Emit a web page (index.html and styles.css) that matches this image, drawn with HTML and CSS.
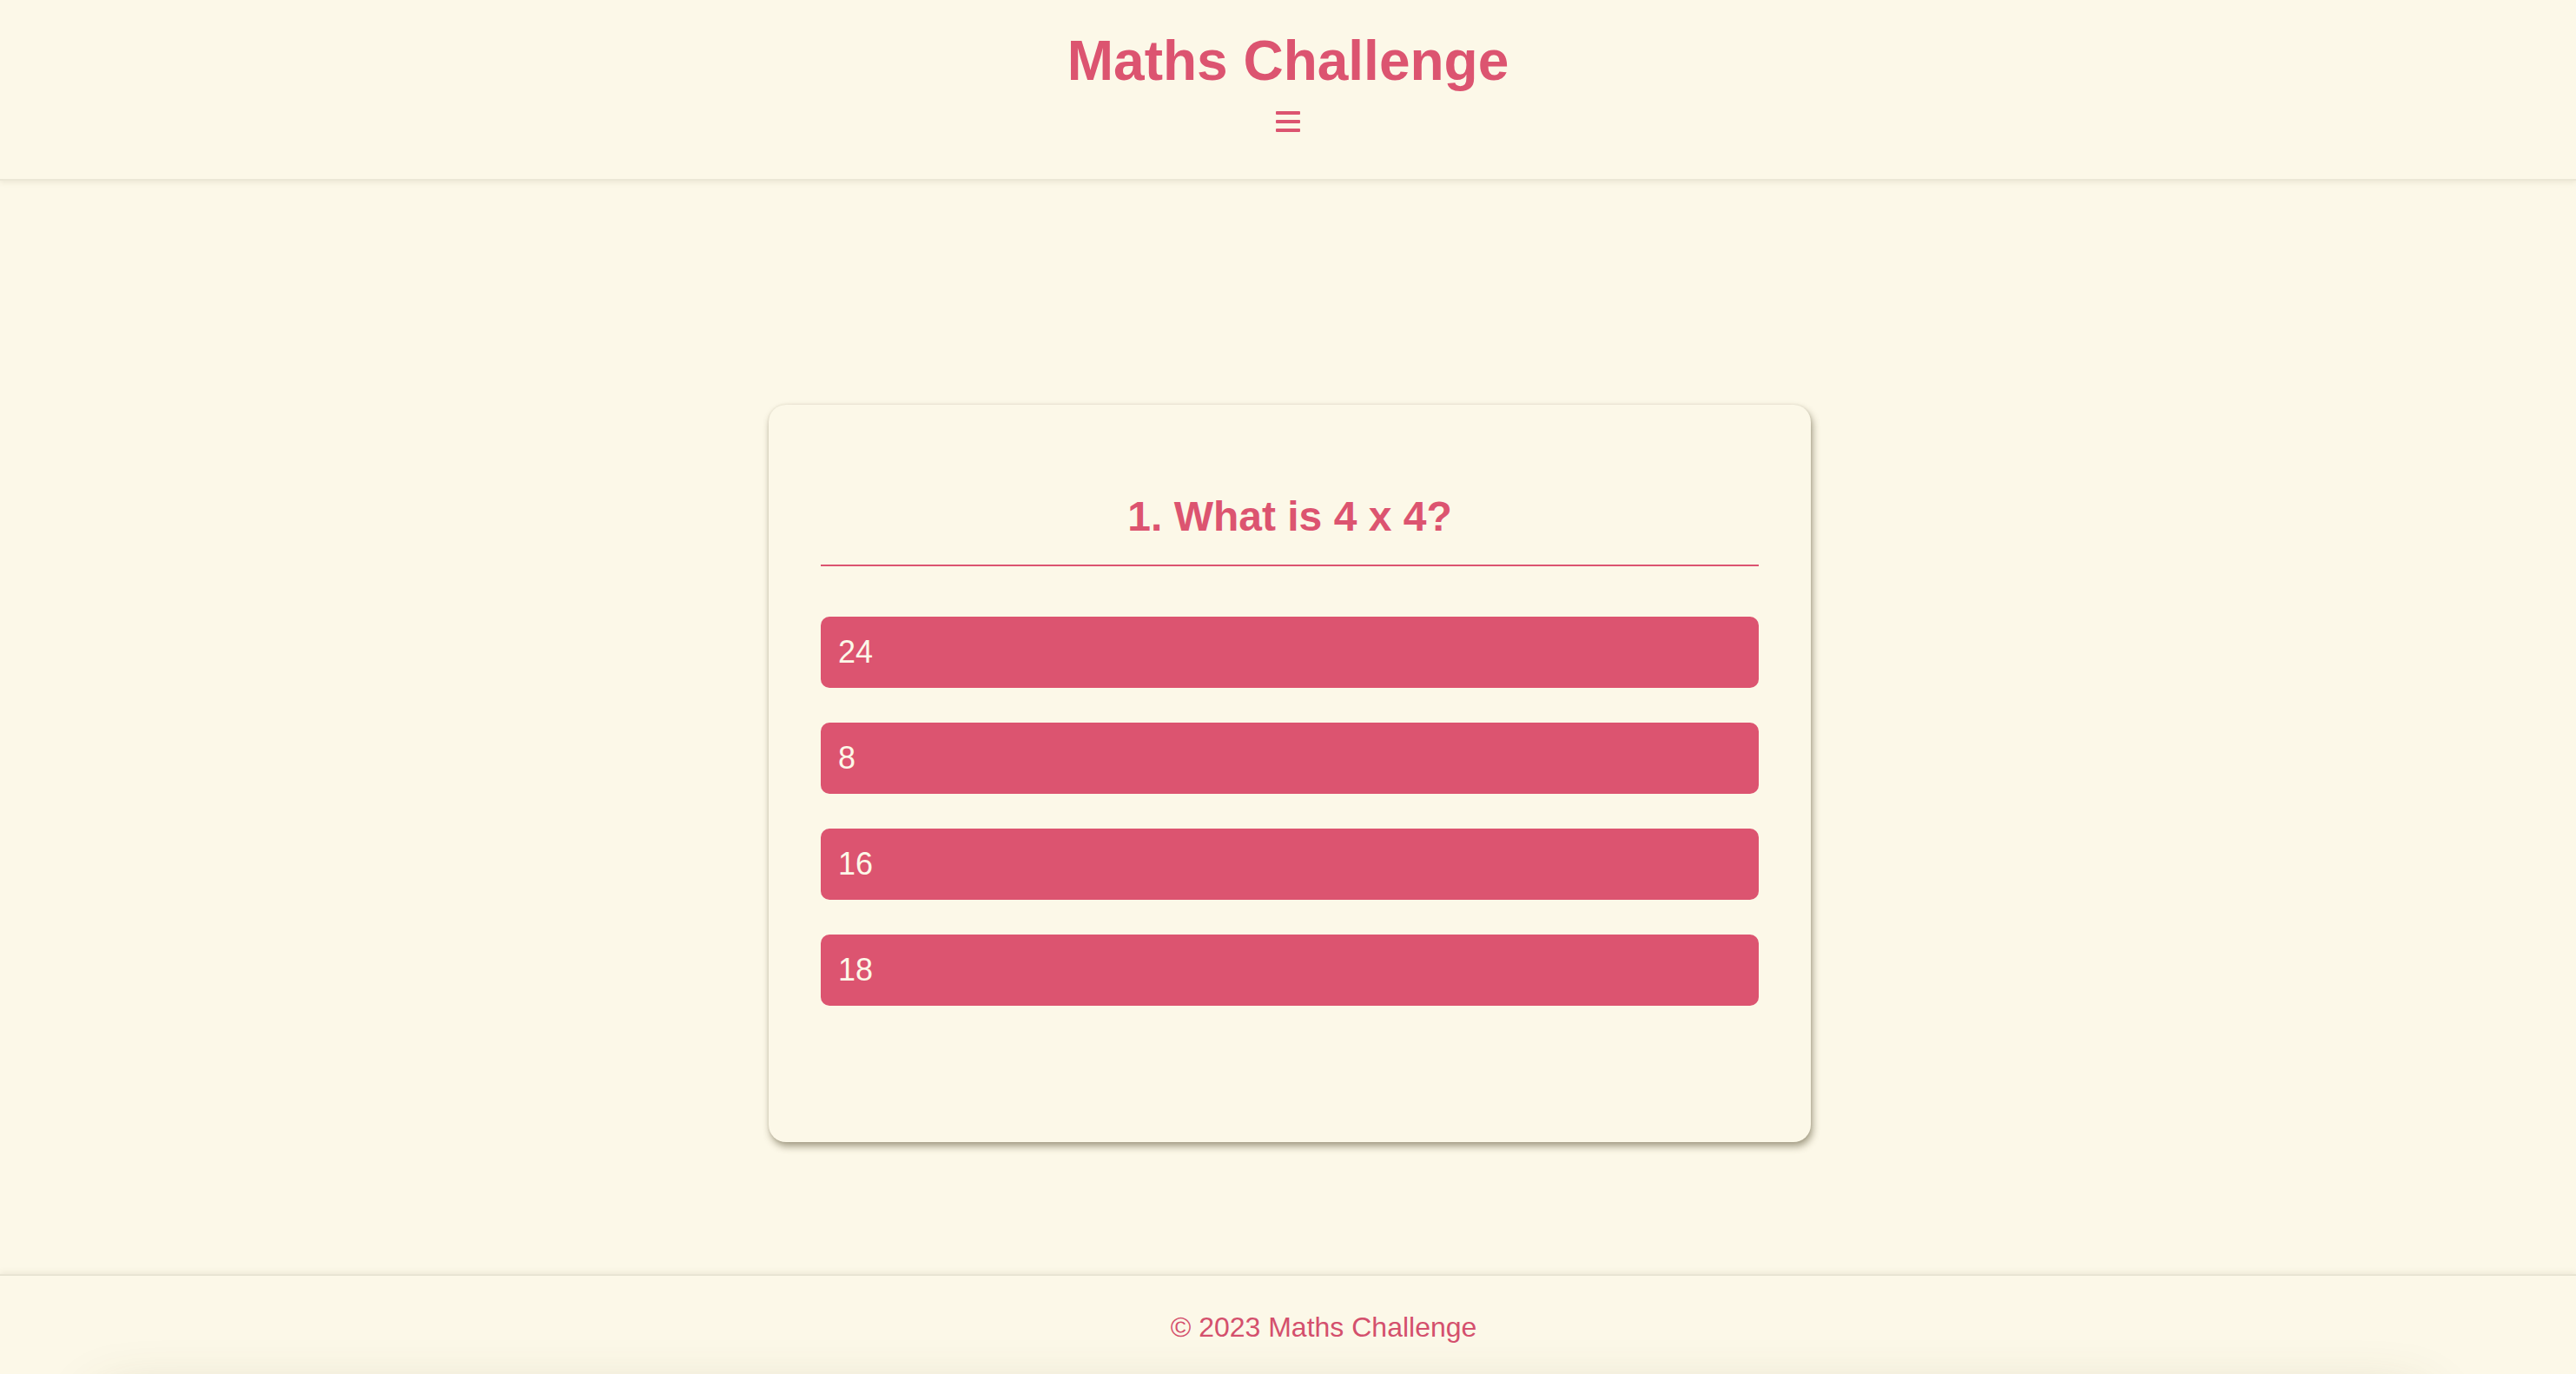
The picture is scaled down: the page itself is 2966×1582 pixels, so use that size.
FILE: index.html
```html
<!DOCTYPE html>
<html lang="en">
<head>
<meta charset="utf-8">
<title>Maths Challenge</title>
<link rel="stylesheet" href="styles.css">
</head>
<body>
<header class="site-header">
  <h1 class="site-title">Maths Challenge</h1>
  <div class="menu-toggle" aria-label="Menu">
    <svg width="28" height="24" viewBox="0 0 28 24" aria-hidden="true">
      <rect x="0" y="0" width="28" height="4" rx="1" fill="#dc5470"/>
      <rect x="0" y="10" width="28" height="4" rx="1" fill="#dc5470"/>
      <rect x="0" y="20" width="28" height="4" rx="1" fill="#dc5470"/>
    </svg>
  </div>
</header>
<main class="main">
  <section class="quiz-card">
    <h2 class="question">1. What is 4 x 4?</h2>
    <div class="answers">
      <button class="answer">24</button>
      <button class="answer">8</button>
      <button class="answer">16</button>
      <button class="answer">18</button>
    </div>
  </section>
</main>
<footer class="site-footer">
  <p class="copyright">© 2023 Maths Challenge</p>
  <div class="footer-bar"></div>
</footer>
</body>
</html>
```

FILE: styles.css
```css
html, body {
  margin: 0;
  padding: 0;
}
body {
  background: #fcf8e8;
  font-family: "Liberation Sans", Arial, Helvetica, sans-serif;
  color: #dc5470;
}
.site-header {
  padding: 33px 0 54px;
  text-align: center;
  border-bottom: 2px solid #ebe7d6;
  box-shadow: 0 2px 6px rgba(90, 80, 40, 0.1);
  position: relative;
  z-index: 1;
}
.site-title {
  margin: 0;
  font-size: 64px;
  line-height: 74px;
  font-weight: bold;
  color: #dc5470;
}
.menu-toggle {
  margin-top: 21px;
  height: 24px;
  display: flex;
  justify-content: center;
}
.main {
  padding: 258px 0 152px 4px;
  display: flex;
  justify-content: center;
}
.quiz-card {
  width: 1200px;
  box-sizing: border-box;
  padding: 60px 60px 157px;
  border-radius: 20px;
  background: #fcf8e8;
  box-shadow: 2px 5px 9px rgba(70, 60, 30, 0.48), 0 0 3px rgba(70, 60, 30, 0.12);
}
.question {
  margin: 41px 0 40px;
  padding-bottom: 28px;
  border-bottom: 2px solid #dc5470;
  text-align: center;
  font-size: 48px;
  line-height: 55px;
  font-weight: bold;
  color: #dc5470;
}
.answers {
  display: flex;
  flex-direction: column;
  gap: 40px;
  padding-top: 18px;
}
.answer {
  display: block;
  width: 100%;
  height: 82px;
  padding: 0 20px;
  border: none;
  border-radius: 10px;
  background: #dc5470;
  color: #fcf8e8;
  font-family: "Liberation Sans", Arial, Helvetica, sans-serif;
  font-size: 36px;
  text-align: left;
}
.site-footer {
  border-top: 2px solid #e8e4d3;
  box-shadow: 0 -2px 7px rgba(90, 80, 40, 0.09);
  padding-top: 41px;
  height: 300px;
  box-sizing: border-box;
}
.copyright {
  margin: 0;
  padding-left: 82px;
  text-align: center;
  font-size: 32px;
  line-height: 37px;
  color: #d4506d;
}
.footer-bar {
  margin: 70px 180px 0 120px;
  height: 100px;
  background: #fcf8e8;
  box-shadow: 0 0 70px rgba(90, 80, 40, 0.3);
}
```
